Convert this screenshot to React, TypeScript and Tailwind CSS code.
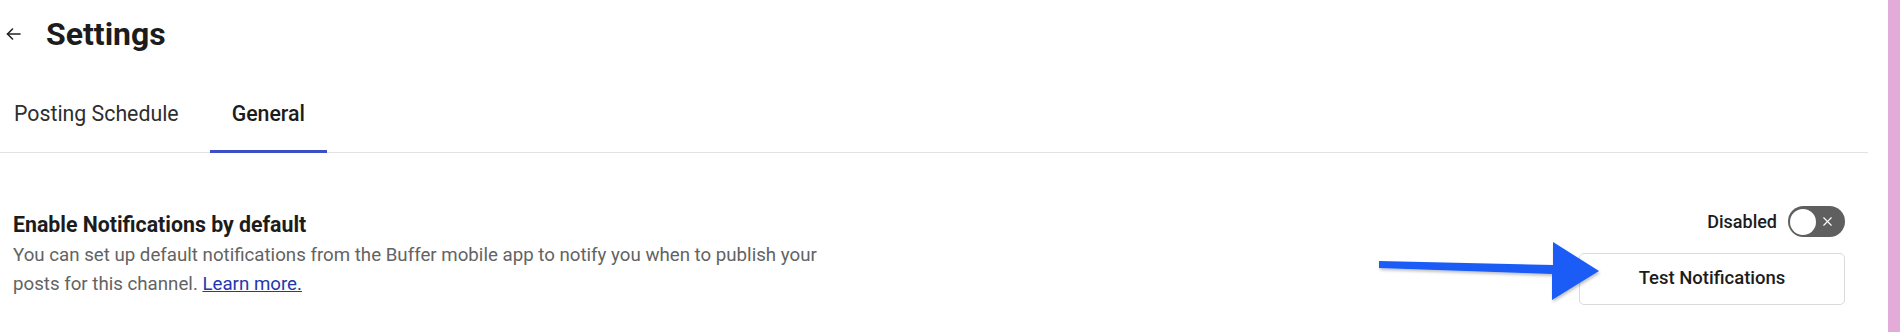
import { X } from 'lucide-react';

// --- Small pieces ---
function BackArrow() {
  return (
    <svg width="15" height="12" viewBox="0 0 15 12" fill="none" stroke="#222" strokeWidth="1.6" strokeLinecap="round" strokeLinejoin="round">
      <path d="M1.5 6H14" />
      <path d="M6.5 1L1.5 6l5 5" />
    </svg>
  );
}

function Toggle() {
  return (
    <button className="relative flex items-center w-[57px] h-[31px] rounded-full bg-[#5f5f5f] px-[2px]">
      <span className="w-[26px] h-[26px] rounded-full bg-white" />
      <X className="ml-auto mr-[8px] text-white" size={15} strokeWidth={1.8} />
    </button>
  );
}

// annotation arrow drawn over the page
function BlueArrow() {
  return (
    <svg className="absolute left-[1370px] top-[236px] pointer-events-none" width="240" height="75" viewBox="1370 236 240 75">
      <defs>
        <filter id="sh" x="-10%" y="-20%" width="120%" height="150%">
          <feDropShadow dx="1" dy="2" stdDeviation="1.5" floodColor="#000" floodOpacity="0.25" />
        </filter>
      </defs>
      <polygon
        filter="url(#sh)"
        fill="#1b5cf6"
        points="1379,261 1553,265 1553,242 1599,271 1552,300 1552,274 1379,268"
      />
    </svg>
  );
}

export default function App() {
  return (
    <div className="relative flex h-[332px] w-[1900px] bg-white overflow-hidden" style={{ fontFamily: 'Roboto, "Liberation Sans", sans-serif' }}>
      <main className="flex-1 pr-[20px]">
        {/* header */}
        <div className="flex items-center h-[36px] mt-[16px] pl-[6px]">
          <BackArrow />
          <h1 className="ml-[25px] text-[32px] leading-[36px] font-bold text-[#1c1c1c]">Settings</h1>
        </div>

        {/* tabs */}
        <nav className="flex mt-[50px] border-b border-[#e2e2e2]">
          <div className="pl-[14px] pr-[31px] pb-[24px] -mb-px border-b-[3px] border-transparent text-[21.3px] leading-[24px] text-[#2e2e2e]">
            Posting Schedule
          </div>
          <div className="px-[22px] pb-[24px] -mb-px border-b-[3px] border-[#3d4fc4] text-[21.3px] leading-[24px] font-medium text-[#1c1c1c]">
            General
          </div>
        </nav>

        {/* notification setting */}
        <section className="flex items-start justify-between mt-[53px] pl-[13px] pr-[23px]">
          <div className="pt-[6px] w-[830px]">
            <h2 className="text-[21.3px] leading-[26px] font-bold text-[#1c1c1c]">Enable Notifications by default</h2>
            <p className="mt-[3px] text-[18.7px] leading-[29px] text-[#636363]">
              You can set up default notifications from the Buffer mobile app to notify you when to publish your posts for this channel.{' '}
              <a href="#" className="text-[#2338ad] underline">Learn more.</a>
            </p>
          </div>
          <div className="flex flex-col items-end">
            <div className="flex items-center gap-[11px]">
              <span className="text-[18px] leading-[24px] font-medium text-[#1c1c1c]">Disabled</span>
              <Toggle />
            </div>
            <button className="mt-[16px] w-[266px] h-[52px] rounded-[5px] border border-[#dadada] bg-white text-[18.5px] font-medium text-[#1c1c1c]">
              Test Notifications
            </button>
          </div>
        </section>
      </main>
      <div className="w-[12px] h-full bg-[#e3acd8]" />
      <BlueArrow />
    </div>
  );
}
